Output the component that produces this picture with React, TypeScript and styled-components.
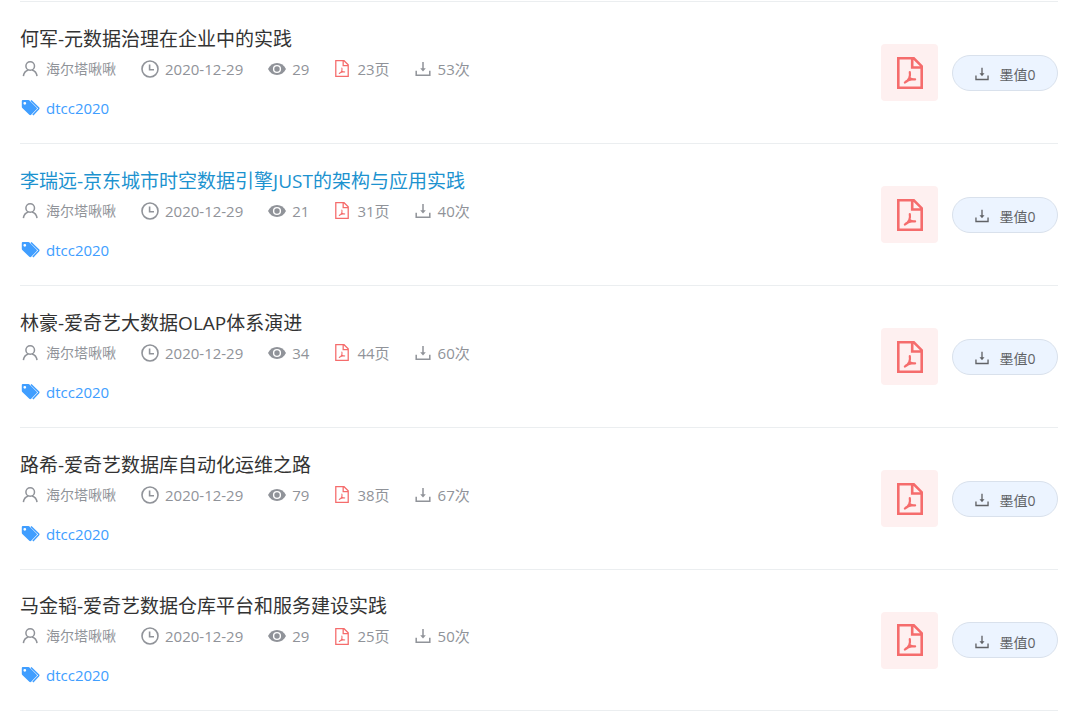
import React from "react";
import styled, { createGlobalStyle } from "styled-components";

const GlobalStyle = createGlobalStyle`
  * { box-sizing: border-box; }
  body {
    margin: 0;
    background: #fff;
    color: #909399;
    font-family: "Open Sans", "Noto Sans CJK SC", sans-serif;
    font-size: 15px;
  }
`;

const List = styled.ul`
  list-style: none;
  margin: 0;
  padding: 1px 22px 0 20px;
`;

const Row = styled.li`
  display: flex;
  align-items: center;
  gap: 14px;
  min-height: 142px;
  border-top: 1px solid #ebeef0;

  &:last-child { border-bottom: 1px solid #ebeef0; }
`;

const Info = styled.div`
  flex: 1;
  min-width: 0;
`;

const Title = styled.h2`
  margin: 0 0 5px;
  font-size: 19px;
  font-weight: 400;
  line-height: 28px;
`;

const TitleLink = styled.a<{ $active?: boolean }>`
  color: ${(p) => (p.$active ? "#1c92cf" : "#333")};
  text-decoration: none;
  &:hover { color: #1c92cf; }
`;

const Meta = styled.div`
  display: flex;
  flex-wrap: wrap;
  gap: 24px;
  margin-bottom: 17px;
  line-height: 22px;
`;

const MetaItem = styled.span`
  display: inline-flex;
  align-items: center;
  gap: 6px;
`;

const Author = styled(MetaItem)`
  min-width: 97px;
  font-size: 14px;
`;

const Tag = styled.a`
  display: inline-flex;
  align-items: center;
  gap: 6px;
  line-height: 22px;
  color: #409eff;
  text-decoration: none;
`;

const FileBadge = styled.div`
  display: flex;
  align-items: center;
  justify-content: center;
  width: 57px;
  height: 57px;
  border-radius: 4px;
  background: #fef0f0;
`;

const Download = styled.button`
  display: flex;
  align-items: center;
  justify-content: center;
  gap: 9px;
  width: 106px;
  height: 36px;
  padding: 3px 0 0;
  border: 1px solid #d9e1ec;
  border-radius: 18px;
  background: #ecf4ff;
  color: #606266;
  font: inherit;
  font-size: 14px;
  cursor: pointer;
`;

const Icon = styled.svg`
  display: block;
  flex: none;
  fill: none;
  stroke: currentColor;
`;

const UserIcon = () => (
  <Icon width="20" height="18" viewBox="0 0 20 18" strokeWidth="1.5" aria-hidden>
    <circle cx="10.2" cy="6" r="4.3" />
    <path d="M3.4 16.2c.4-3.400 2.200-5.600 5-6.300M17 16.200c-.4-3.400-2.200-5.600-5-6.300" />
  </Icon>
);

const ClockIcon = () => (
  <Icon width="18" height="18" viewBox="0 0 18 18" strokeWidth="1.6" aria-hidden>
    <circle cx="9" cy="9" r="8" />
    <path d="M8.6 4.6v5.2H13" />
  </Icon>
);

const EyeIcon = () => (
  <Icon width="19" height="18" viewBox="0 0 19 18" aria-hidden>
    <path
      d="M1 9C2.900 5.200 6 3 10 3s7.100 2.200 9 6C17.100 12.800 14 15 10 15S2.900 12.800 1 9Z"
      fill="currentColor"
      stroke="none"
    />
    <circle cx="10" cy="9" r="3.400" stroke="#fff" strokeWidth="1.400" />
  </Icon>
);

const PdfIcon = ({ width, height, weight }: { width: number; height: number; weight: number }) => (
  <Icon width={width} height={height} viewBox="0 0 26 32" strokeWidth={weight} color="#f56c6c" aria-hidden>
    <path d="M1.300 1.300h15.500l7.900 7.900v21.500H1.300zM15.200 1.300v9.200h9.500" />
    <path
      d="M12.800 15.200c.4 2 .3 3.800-.5 5.800M7.900 25.500c1.800-.8 3.200-2.200 4.400-4.500M9.300 24.200c2.200-1.100 4-1.700 5.500-1.700M12.400 20.600c1.300 1.500 3 2.100 5.700 1.800"
      strokeLinecap="round"
      strokeWidth={weight * 0.85}
    />
  </Icon>
);

const DownloadIcon = ({ size = 18 }: { size?: number }) => (
  <Icon width={size} height={size} viewBox="0 0 18 18" strokeWidth="1.500" aria-hidden>
    <path d="M2.200 10.800v4.400h13.600v-4.400M9 2v8" />
    <path d="M6.200 8.200h5.600L9 11.400z" fill="currentColor" stroke="none" />
  </Icon>
);

const TagsIcon = () => (
  <Icon width="20" height="18" viewBox="0 0 20 18" aria-hidden>
    <path
      d="M2.800 1h5.700q.6 0 1 .4l7 7c.6.600.6 1.300 0 1.900l-5.300 5.500c-.6.600-1.300.6-1.900 0L2.300 9q-.5-.5-.5-1.200V2q0-1 1-1Zm2 1.900a1.400 1.400 0 1 0 0 2.800 1.400 1.400 0 0 0 0-2.800Z"
      fill="currentColor"
      fillRule="evenodd"
      stroke="none"
    />
    <path d="M11 1.500l7.500 7.200q.6.600 0 1.200L12.900 16" strokeWidth="1.500" />
  </Icon>
);

const PdfSlot = styled.span`
  display: flex;
  justify-content: center;
  width: 18px;
`;

interface Doc {
  title: string;
  views: number;
  pages: number;
  downloads: number;
  active?: boolean;
}

const docs: Doc[] = [
  { title: "何军-元数据治理在企业中的实践", views: 29, pages: 23, downloads: 53 },
  { title: "李瑞远-京东城市时空数据引擎JUST的架构与应用实践", views: 21, pages: 31, downloads: 40, active: true },
  { title: "林豪-爱奇艺大数据OLAP体系演进", views: 34, pages: 44, downloads: 60 },
  { title: "路希-爱奇艺数据库自动化运维之路", views: 79, pages: 38, downloads: 67 },
  { title: "马金韬-爱奇艺数据仓库平台和服务建设实践", views: 29, pages: 25, downloads: 50 },
];

const DocRow = ({ doc }: { doc: Doc }) => (
  <Row>
    <Info>
      <Title>
        <TitleLink href="#" $active={doc.active}>{doc.title}</TitleLink>
      </Title>
      <Meta>
        <Author><UserIcon />海尔塔啾啾</Author>
        <MetaItem><ClockIcon />2020-12-29</MetaItem>
        <MetaItem><EyeIcon />{doc.views}</MetaItem>
        <MetaItem>
          <PdfSlot><PdfIcon width={14} height={17} weight={2.4} /></PdfSlot>
          {`${doc.pages}页`}
        </MetaItem>
        <MetaItem><DownloadIcon />{`${doc.downloads}次`}</MetaItem>
      </Meta>
      <Tag href="#"><TagsIcon />dtcc2020</Tag>
    </Info>
    <FileBadge><PdfIcon width={26} height={32} weight={2.6} /></FileBadge>
    <Download type="button"><DownloadIcon size={16} />墨值0</Download>
  </Row>
);

export default function App() {
  return (
    <>
      <GlobalStyle />
      <List>
        {docs.map((doc) => <DocRow key={doc.title} doc={doc} />)}
      </List>
    </>
  );
}
